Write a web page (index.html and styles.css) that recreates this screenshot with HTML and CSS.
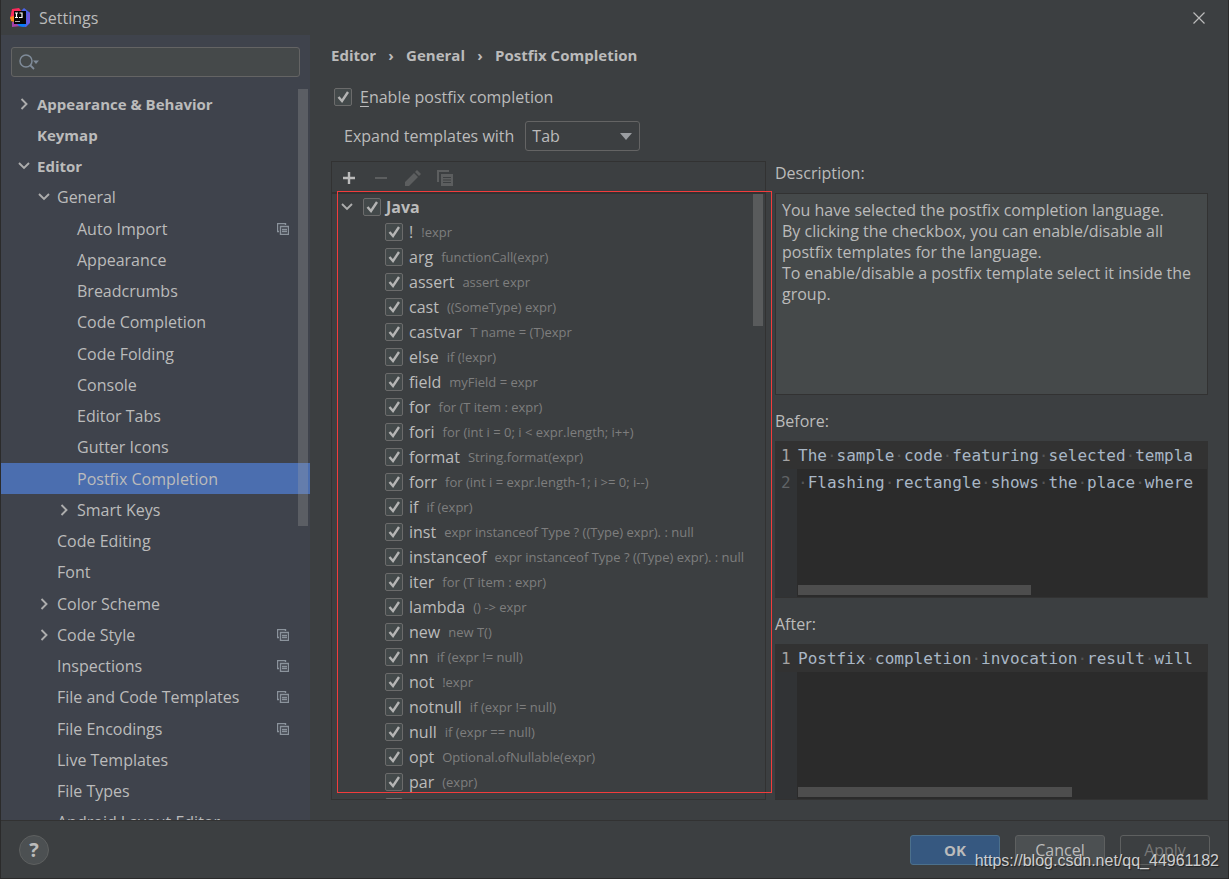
FILE: index.html
```html
<!DOCTYPE html>
<html lang="en">
<head>
<meta charset="utf-8">
<title>Settings</title>
<link rel="stylesheet" href="styles.css">
</head>
<body>
<svg class="defs" aria-hidden="true">
  <symbol id="right" viewBox="0 0 16 16"><path d="M5.500 3l5 5-5 5" fill="none" stroke="currentColor" stroke-width="1.900"/></symbol>
  <symbol id="down" viewBox="0 0 16 16"><path d="M3 5l5 5 5-5" fill="none" stroke="currentColor" stroke-width="1.900"/></symbol>
  <symbol id="copy" viewBox="0 0 12 12"><path d="M2 8.500H.5v-8h8V2" fill="none" stroke="currentColor" stroke-width="1.400"/><path d="M3.500 3.500h8v8h-8zM5 6.500h5M5 8.500h5" fill="none" stroke="currentColor" stroke-width="1.400"/></symbol>
</svg>
<div class="window">
  <header class="titlebar">
    <svg class="logo" viewBox="0 0 20 20" aria-hidden="true">
      <path d="M2 1l7-1 3 4-6 8-6-1z" fill="#fb2a5c"/>
      <path d="M11 3l3-3 5 4 1 11-4 4-8-1z" fill="#4a63e8"/>
      <path d="M17 6l3-2v10l-3 3z" fill="#7357d8"/>
      <path d="M0 9l4-1v6l-3-1z" fill="#fa8b20"/>
      <path d="M2 14h5l4 4-9 1z" fill="#a741a8"/>
      <path d="M7 16h9l-2 3-5-1z" fill="#087cfa"/>
      <path d="M4 3h12v13H4z" fill="#050505"/>
      <path d="M5 5h3M6.500 5v4.500M5 9.500h3M9.500 5H12v4.500H9" fill="none" stroke="#fff" stroke-width="1.200"/>
      <path d="M5 13.500h5" stroke="#aaa"/>
    </svg>
    <h1 class="title">Settings</h1>
    <button class="close" aria-label="Close"><svg viewBox="0 0 12 12"><path d="M.5.5l11 11M11.500.5l-11 11" stroke="currentColor" stroke-width="1.200"/></svg></button>
  </header>

  <div class="main">
    <aside class="sidebar">
      <div class="search">
        <svg viewBox="0 0 22 16" aria-hidden="true"><circle cx="7" cy="7" r="6" fill="none" stroke="currentColor" stroke-width="1.500"/><path d="M11 11l4 4" stroke="currentColor" stroke-width="1.800"/><path d="M14 6.500h6l-3 3.500z" fill="currentColor"/></svg>
        <input type="text" aria-label="Search settings">
      </div>
      <nav class="tree">
        <ul class="nodes">
          <li class="node bold"><svg class="arrow"><use href="#right"/></svg>Appearance &amp; Behavior</li>
          <li class="node bold"><span class="arrow"></span>Keymap</li>
          <li class="node bold"><svg class="arrow"><use href="#down"/></svg>Editor</li>
          <li class="node l2"><svg class="arrow"><use href="#down"/></svg>General</li>
          <li class="node l3"><span class="arrow"></span>Auto Import<svg class="copy"><use href="#copy"/></svg></li>
          <li class="node l3"><span class="arrow"></span>Appearance</li>
          <li class="node l3"><span class="arrow"></span>Breadcrumbs</li>
          <li class="node l3"><span class="arrow"></span>Code Completion</li>
          <li class="node l3"><span class="arrow"></span>Code Folding</li>
          <li class="node l3"><span class="arrow"></span>Console</li>
          <li class="node l3"><span class="arrow"></span>Editor Tabs</li>
          <li class="node l3"><span class="arrow"></span>Gutter Icons</li>
          <li class="node l3 selected"><span class="arrow"></span>Postfix Completion</li>
          <li class="node l3"><svg class="arrow"><use href="#right"/></svg>Smart Keys</li>
          <li class="node l2"><span class="arrow"></span>Code Editing</li>
          <li class="node l2"><span class="arrow"></span>Font</li>
          <li class="node l2"><svg class="arrow"><use href="#right"/></svg>Color Scheme</li>
          <li class="node l2"><svg class="arrow"><use href="#right"/></svg>Code Style<svg class="copy"><use href="#copy"/></svg></li>
          <li class="node l2"><span class="arrow"></span>Inspections<svg class="copy"><use href="#copy"/></svg></li>
          <li class="node l2"><span class="arrow"></span>File and Code Templates<svg class="copy"><use href="#copy"/></svg></li>
          <li class="node l2"><span class="arrow"></span>File Encodings<svg class="copy"><use href="#copy"/></svg></li>
          <li class="node l2"><span class="arrow"></span>Live Templates</li>
          <li class="node l2"><span class="arrow"></span>File Types</li>
          <li class="node l2"><span class="arrow"></span>Android Layout Editor</li>
        </ul>
        <div class="scroll-thumb"></div>
      </nav>
    </aside>

    <main class="content">
      <nav class="crumbs"><a>Editor</a><span class="sep">›</span><a>General</a><span class="sep">›</span><a>Postfix Completion</a></nav>
      <label class="enable"><input class="check" type="checkbox" checked><span><u>E</u>nable postfix completion</span></label>
      <div class="expand">
        <label for="key">Expand templates with</label>
        <span class="combo"><select id="key"><option>Tab</option></select><svg viewBox="0 0 12 7" aria-hidden="true"><path d="M0 0h12l-6 7z" fill="currentColor"/></svg></span>
      </div>

      <div class="columns">
        <section class="templates">
          <div class="toolbar">
            <button class="tool" aria-label="Add"><svg viewBox="0 0 16 16"><path d="M8 2v12M2 8h12" stroke="currentColor" stroke-width="2.400"/></svg></button>
            <button class="tool" aria-label="Remove" disabled><svg viewBox="0 0 16 16"><path d="M2 8h12" stroke="currentColor" stroke-width="2"/></svg></button>
            <button class="tool" aria-label="Edit" disabled><svg viewBox="0 0 16 16"><path d="M0 16v-4l9-9 4 4-9 9zM10 2l2-2 4 4-2 2z" fill="currentColor"/></svg></button>
            <button class="tool" aria-label="Duplicate" disabled><svg viewBox="0 0 16 16"><path d="M1 12V1h11" fill="none" stroke="currentColor" stroke-width="2"/><path fill-rule="evenodd" d="M4 4h12v12H4zM6 7v1h8V7zM6 9.500v1h8v-1zM6 12v1h8v-1z" fill="currentColor"/></svg></button>
          </div>
          <div class="list">
            <div class="row lang"><svg class="arrow"><use href="#down"/></svg><label><input class="check" type="checkbox" checked>Java</label></div>
            <label class="row"><input class="check" type="checkbox" checked>!<small>!expr</small></label>
            <label class="row"><input class="check" type="checkbox" checked>arg<small>functionCall(expr)</small></label>
            <label class="row"><input class="check" type="checkbox" checked>assert<small>assert expr</small></label>
            <label class="row"><input class="check" type="checkbox" checked>cast<small>((SomeType) expr)</small></label>
            <label class="row"><input class="check" type="checkbox" checked>castvar<small>T name = (T)expr</small></label>
            <label class="row"><input class="check" type="checkbox" checked>else<small>if (!expr)</small></label>
            <label class="row"><input class="check" type="checkbox" checked>field<small>myField = expr</small></label>
            <label class="row"><input class="check" type="checkbox" checked>for<small>for (T item : expr)</small></label>
            <label class="row"><input class="check" type="checkbox" checked>fori<small>for (int i = 0; i &lt; expr.length; i++)</small></label>
            <label class="row"><input class="check" type="checkbox" checked>format<small>String.format(expr)</small></label>
            <label class="row"><input class="check" type="checkbox" checked>forr<small>for (int i = expr.length-1; i &gt;= 0; i--)</small></label>
            <label class="row"><input class="check" type="checkbox" checked>if<small>if (expr)</small></label>
            <label class="row"><input class="check" type="checkbox" checked>inst<small>expr instanceof Type ? ((Type) expr). : null</small></label>
            <label class="row"><input class="check" type="checkbox" checked>instanceof<small>expr instanceof Type ? ((Type) expr). : null</small></label>
            <label class="row"><input class="check" type="checkbox" checked>iter<small>for (T item : expr)</small></label>
            <label class="row"><input class="check" type="checkbox" checked>lambda<small>() -&gt; expr</small></label>
            <label class="row"><input class="check" type="checkbox" checked>new<small>new T()</small></label>
            <label class="row"><input class="check" type="checkbox" checked>nn<small>if (expr != null)</small></label>
            <label class="row"><input class="check" type="checkbox" checked>not<small>!expr</small></label>
            <label class="row"><input class="check" type="checkbox" checked>notnull<small>if (expr != null)</small></label>
            <label class="row"><input class="check" type="checkbox" checked>null<small>if (expr == null)</small></label>
            <label class="row"><input class="check" type="checkbox" checked>opt<small>Optional.ofNullable(expr)</small></label>
            <label class="row"><input class="check" type="checkbox" checked>par<small>(expr)</small></label>
            <label class="row"><input class="check" type="checkbox" aria-label="More" checked></label>
            <div class="scroll-thumb"></div>
          </div>
          <div class="highlight"></div>
        </section>

        <section class="preview">
          <h2 class="caption">Description:</h2>
          <div class="description">
            <p>You have selected the postfix completion language.</p>
            <p>By clicking the checkbox, you can enable/disable all postfix templates for the language.</p>
            <p>To enable/disable a postfix template select it inside the group.</p>
          </div>
          <h2 class="caption spaced">Before:</h2>
          <div class="editor">
            <div class="line current"><span class="num">1</span><code>The<i>·</i>sample<i>·</i>code<i>·</i>featuring<i>·</i>selected<i>·</i>templa</code></div>
            <div class="line"><span class="num">2</span><code><i>·</i>Flashing<i>·</i>rectangle<i>·</i>shows<i>·</i>the<i>·</i>place<i>·</i>where</code></div>
            <div class="h-track"><div class="h-thumb before"></div></div>
          </div>
          <h2 class="caption spaced">After:</h2>
          <div class="editor">
            <div class="line current"><span class="num">1</span><code>Postfix<i>·</i>completion<i>·</i>invocation<i>·</i>result<i>·</i>will</code></div>
            <div class="h-track"><div class="h-thumb after"></div></div>
          </div>
        </section>
      </div>
    </main>
  </div>

  <footer class="footer">
    <button class="help" aria-label="Help">?</button>
    <div class="actions">
      <button class="btn primary">OK</button>
      <button class="btn">Cancel</button>
      <button class="btn" disabled>Apply</button>
    </div>
    <div class="watermark">https://blog.csdn.net/qq_44961182</div>
  </footer>
</div>
</body>
</html>
```

FILE: styles.css
```css
* { box-sizing: border-box; }

body {
  margin: 0;
  background: #3c3f41;
  color: #bbbbbb;
  font: 16px/24px "Open Sans", "Noto Sans", sans-serif;
}

button, input, select { font: inherit; color: inherit; margin: 0; }
button { cursor: pointer; padding: 0; }
h1, h2, p, ul { margin: 0; padding: 0; font-size: inherit; font-weight: 400; list-style: none; }
.defs { position: absolute; width: 0; height: 0; }

.window {
  height: 100vh;
  display: grid;
  grid-template-rows: 35px minmax(0, 1fr) 58px;
  border: 1px solid #2b2b2b;
  border-top: 0;
}

.titlebar { display: flex; align-items: center; gap: 9px; padding: 0 23px 0 9px; }
.logo { width: 20px; height: 20px; }
.close { margin-left: auto; width: 12px; height: 12px; border: 0; background: none; display: flex; }
.close svg { width: 12px; height: 12px; }

.main { display: grid; grid-template-columns: 309px minmax(0, 1fr); min-height: 0; }

/* Category tree */
.sidebar { display: flex; flex-direction: column; min-height: 0; background: #3f434c; }
.search {
  display: flex;
  align-items: center;
  height: 30px;
  margin: 12px 10px 11px;
  padding-left: 7px;
  border: 1px solid #646464;
  border-radius: 3px;
  background: #45494a;
  color: #7f8b99;
}
.search svg { width: 22px; height: 16px; flex: none; }
.search input { flex: 1; min-width: 0; height: 100%; border: 0; outline: 0; background: none; color: #bbbbbb; }
.tree { position: relative; flex: 1; min-height: 0; overflow: hidden; }
.nodes { display: grid; grid-auto-rows: 1fr; height: 750px; }
.node { display: flex; align-items: center; gap: 5px; padding: 0 21px 0 15px; white-space: nowrap; }
.node.l2 { padding-left: 35px; }
.node.l3 { padding-left: 55px; }
.bold { font-size: 15px; font-weight: 700; }
.arrow { width: 16px; height: 16px; flex: none; color: #adadad; }
.copy { width: 12px; height: 12px; margin-left: auto; color: #8b939c; }
.selected { background: #4b6eaf; }
.scroll-thumb { position: absolute; background: rgba(166, 166, 166, 0.28); width: 10px; }
.tree .scroll-thumb { top: 1px; right: 2px; height: 437px; }

/* Page */
.content { display: flex; flex-direction: column; min-height: 0; padding: 8px 20px 20px 21px; }
.crumbs { display: flex; font-size: 15px; font-weight: 700; }
.sep { width: 30px; text-align: center; }
.check {
  appearance: none;
  flex: none;
  width: 18px;
  height: 18px;
  border: 1px solid #6b6b6b;
  border-radius: 2px;
  background: #43494a;
}
.check:checked {
  background-image: url("data:image/svg+xml,%3Csvg xmlns='http://www.w3.org/2000/svg' viewBox='0 0 16 16'%3E%3Cpath d='M3.500 8l3.500 4 6-9' fill='none' stroke='%23b4b4b4' stroke-width='2.400'/%3E%3C/svg%3E");
}
.enable { display: flex; align-items: center; gap: 8px; margin-top: 18px; padding-left: 3px; }
.enable u { text-underline-offset: 3px; }
.expand { display: flex; align-items: center; gap: 11px; margin-top: 12px; padding-left: 13px; }
.combo { position: relative; display: flex; }
.combo select {
  appearance: none;
  width: 115px;
  height: 30px;
  padding: 0 6px;
  border: 1px solid #646464;
  border-radius: 3px;
  background: #3c3f41;
}
.combo svg { position: absolute; right: 8px; top: 12px; width: 12px; height: 7px; color: #9a9da1; pointer-events: none; }

.columns {
  flex: 1;
  min-height: 0;
  margin-top: 10px;
  display: grid;
  grid-template-columns: minmax(0, 435fr) minmax(0, 433fr);
  gap: 9px;
}

/* Template list */
.templates { position: relative; display: flex; flex-direction: column; min-height: 0; border: 1px solid #323232; }
.toolbar { display: flex; align-items: center; gap: 16px; height: 32px; padding: 2px 0 0 9px; border-bottom: 2px solid #323232; }
.tool { width: 16px; height: 16px; border: 0; background: none; display: flex; }
.tool:disabled { color: #5c5e5f; }
.tool svg { width: 16px; height: 16px; }
.list { position: relative; flex: 1; min-height: 0; overflow: hidden; }
.row { display: flex; align-items: center; gap: 6px; height: 25px; padding-left: 53px; white-space: nowrap; }
.row small { margin-left: 2px; font-size: 13px; color: #7e7e7e; }
.lang { gap: 8px; padding-left: 7px; font-weight: 700; }
.lang label { display: flex; align-items: center; gap: 5px; }
.list .scroll-thumb { top: 0; right: 2px; height: 132px; }
.highlight { position: absolute; top: 29px; right: -7px; bottom: 6px; left: 5px; border: 1px solid #f23c3c; pointer-events: none; }

/* Preview column */
.preview {
  display: grid;
  grid-template-rows: auto minmax(0, 202fr) auto minmax(0, 156fr) auto minmax(0, 156fr);
  min-height: 0;
}
.caption { padding-bottom: 8px; }
.spaced { padding-top: 14px; }
.description { padding: 6px; border: 1px solid #323232; background: #45494a; line-height: 21px; }
.editor {
  position: relative;
  overflow: hidden;
  background: linear-gradient(90deg, #313335 22px, #2b2b2b 22px);
  border: 1px solid #323232;
  border-left: 0;
  font: 16px/27px "DejaVu Sans Mono", monospace;
}
.line { display: grid; grid-template-columns: 22px minmax(0, 1fr); white-space: pre; color: #a9b7c6; }
.line code { font: inherit; padding-left: 1px; overflow: hidden; }
.line i { font-style: normal; color: #555555; }
.num { padding-left: 6px; color: #606366; }
.current { background: #323232; }
.current .num { color: #a4a3a3; }
.h-track { position: absolute; right: 0; bottom: 2px; left: 23px; height: 10px; }
.h-thumb { height: 10px; background: #4d4d4d; }
.before { width: 57%; }
.after { width: 67%; }

/* Footer */
.footer { position: relative; display: flex; align-items: center; justify-content: space-between; padding: 0 18px; border-top: 1px solid #323232; }
.help { width: 30px; height: 30px; border: 1px solid #5e6060; border-radius: 50%; background: #4c5052; font-size: 20px; font-weight: 700; line-height: 26px; }
.actions { display: flex; gap: 15px; }
.btn { width: 90px; height: 30px; border: 1px solid #5e6060; border-radius: 3px; background: #4c5052; }
.primary { border-color: #4c708c; background: #365880; font-size: 15px; font-weight: 700; }
.btn:disabled { color: #777777; background: #3c3f41; }
.watermark {
  position: absolute;
  right: 9px;
  bottom: 5px;
  font-family: "Liberation Sans", Arial, sans-serif;
  color: rgba(235, 235, 235, 0.85);
  text-shadow: 1px 1px 1px rgba(0, 0, 0, 0.5);
}
```
